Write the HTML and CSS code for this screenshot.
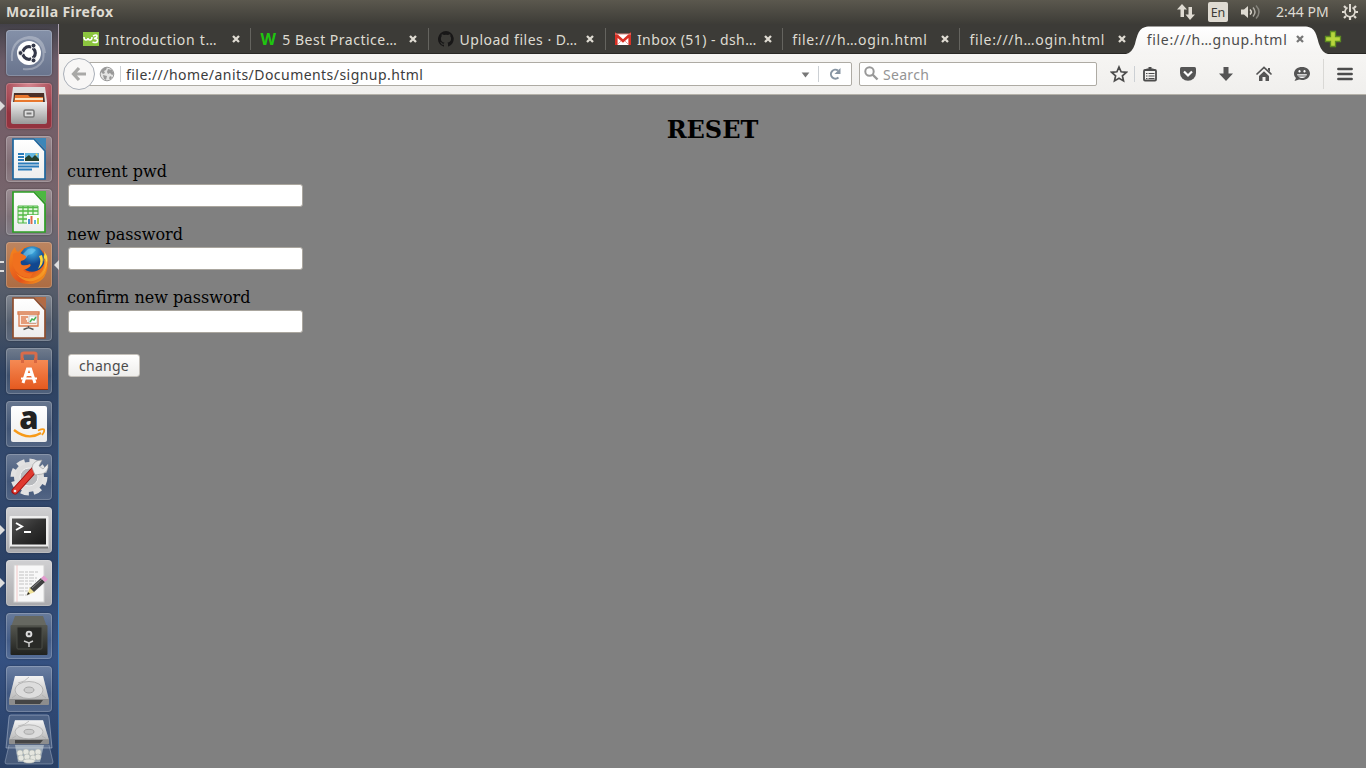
FILE: index.html
```html
<!DOCTYPE html>
<html lang="en">
<head>
<meta charset="utf-8">
<title>Mozilla Firefox</title>
<link rel="stylesheet" href="styles.css">
</head>
<body>
<svg class="defs" width="0" height="0" aria-hidden="true">
  <defs>
    <linearGradient id="metal" x2="0" y2="1"><stop stop-color="#eee"/><stop offset="1" stop-color="#999"/></linearGradient>
    <linearGradient id="orange" x2="0" y2="1"><stop stop-color="#f58a54"/><stop offset="1" stop-color="#e4581e"/></linearGradient>
    <linearGradient id="paper" x2="0" y2="1"><stop stop-color="#fff"/><stop offset="1" stop-color="#ededed"/></linearGradient>
    <radialGradient id="globe" cx=".5" cy=".2"><stop stop-color="#41b4e8"/><stop offset="1" stop-color="#12478f"/></radialGradient>
    <linearGradient id="fox" x2="1" y2="1"><stop stop-color="#f58a1f"/><stop offset=".6" stop-color="#e4521b"/><stop offset="1" stop-color="#f7a81b"/></linearGradient>
    <linearGradient id="term" x2="1" y2="1"><stop stop-color="#555"/><stop offset=".5" stop-color="#303030"/><stop offset="1" stop-color="#191919"/></linearGradient>
    <linearGradient id="safe" x2="0" y2="1"><stop stop-color="#555750"/><stop offset="1" stop-color="#20211e"/></linearGradient>
    <symbol id="x" viewBox="0 0 8 8"><path d="M1 1l6 6M7 1L1 7" stroke="currentColor" stroke-width="2.3"/></symbol>
    <symbol id="disk" viewBox="0 0 46 46" preserveAspectRatio="none">
      <path d="M9 10h28l6 24H3z" fill="url(#metal)"/>
      <path d="M9 10h28l6 24H3z" fill="#fff" opacity=".3"/>
      <path d="M3 33h40v5q0 1-1 1H4q-1 0-1-1z" fill="#8d8d8d"/><path d="M9 34h28l-3 4H9z" fill="#454545"/>
      <ellipse cx="23" cy="24" rx="14" ry="8.5" fill="#ddd" stroke="#aaa" stroke-width=".8"/>
      <ellipse cx="23" cy="24" rx="5" ry="3" fill="#ccc" stroke="#999" stroke-width=".8"/>
      <path d="M12 17q7-1 11-6M6 32l4-3M40 32l-4-3" fill="none" stroke="#aaa" stroke-width=".7"/>
    </symbol>
  </defs>
</svg>

<header class="panel">
  <span class="panel-title">Mozilla Firefox</span>
  <div class="indicators">
    <svg class="net" width="18" height="18" viewBox="0 0 18 18"><path d="M5 1l5 5.500H7V14H3.500V6.500H0zM13 17l-4.500-5.500h3V4H15v7.500h3z" fill="#dfdbd2"/></svg>
    <span class="lang">En</span>
    <svg class="sound" width="20" height="16" viewBox="0 0 20 16"><path d="M0 5.500h3L7 2v12l-4-3.500H0z" fill="#dfdbd2"/><path d="M9 5.500q2.500 2.500 0 5" stroke="#dfdbd2" stroke-width="1.500" fill="none"/><path d="M12 3.500q4 4.500 0 9" stroke="#b0ada5" stroke-width="1.500" fill="none"/><path d="M15 1.500q6 6.500 0 13" stroke="#85837c" stroke-width="1.500" fill="none"/></svg>
    <span class="clock">2:44 PM</span>
    <svg class="gear" width="18" height="18" viewBox="0 0 18 18"><g stroke="#dfdbd2" fill="none"><path d="M6.500 4.500a5 5 0 1 0 5 0" stroke-width="1.700"/><path d="M9 1v8" stroke-width="2"/><path d="M3.800 9H1M17 9h-2.800M9 14v3M5 13l-2 2M13 13l2 2M5 5L3 3M13 5l2-2" stroke-width="2.200"/></g></svg>
  </div>
</header>

<div class="desktop">
<nav class="launcher">
  <div class="tile dash"><svg viewBox="0 0 46 46"><g fill="none" stroke="#fff" opacity=".28" stroke-width="2"><path d="M6 31Q4 10 23 7q14 0 16 16M7 19Q13 5 28 9q12 6 9 21-6 11-20 9"/></g><circle cx="23" cy="23" r="12" fill="#fff"/><circle cx="23" cy="23" r="6.300" fill="none" stroke="#343849" stroke-width="3.200"/><path d="M23 23H13M23 23l5-9M23 23l5 9" stroke="#fff" stroke-width="1.300"/><circle cx="23" cy="23" r="4.300" fill="#fff"/><g fill="#343849" stroke="#fff" stroke-width=".8"><circle cx="14.500" cy="23" r="2.400"/><circle cx="27.500" cy="15.600" r="2.400"/><circle cx="27.500" cy="30.400" r="2.400"/></g></svg></div>
  <div class="tile red run"><svg viewBox="0 0 46 46"><path d="M7 4h32l2 15H5z" fill="#ddd"/><path d="M8 10h30l1 10H7z" fill="#4c3028"/><path d="M9 12h13l2 2h13v6H8z" fill="#e8772e"/><path d="M9 16h28" stroke="#fbe4c0" stroke-width="2"/><path d="M5 19h36v20q0 2-2 2H7q-2 0-2-2z" fill="url(#metal)"/><rect x="18" y="27" width="10" height="7" rx="1.500" fill="#ddd" stroke="#777" stroke-width="1.500"/><path d="M20.500 30.500h5" stroke="#777" stroke-width="2"/></svg></div>
  <div class="tile"><svg viewBox="0 0 46 46"><path d="M7 3h21l11 12v28H7z" fill="url(#paper)" stroke="#1d669e" stroke-width="1.700"/><path d="M28 2h12v12z" fill="#3d86b8"/><path d="M12 18h6M12 21h6M12 24h6M12 27.500h21M12 30.500h21M12 33.500h14" stroke="#2a7cbb" stroke-width="1.800"/><path d="M19 17h14v8H19z" fill="#65b6df"/><path d="M19 25v-3l4-3 3 3 3-3 4 4v2z" fill="#25402c"/><circle cx="30.500" cy="18.500" r="1" fill="#ffd84b"/></svg></div>
  <div class="tile"><svg viewBox="0 0 46 46"><path d="M7 3h21l11 12v28H7z" fill="url(#paper)" stroke="#2c9e24" stroke-width="1.700"/><path d="M28 2h12v12z" fill="#4cb840"/><path d="M12 17h20v17H12z" fill="#e4f5df" stroke="#51b847"/><path d="M12 18.500h20M12 22h20M12 26h20M12 30h20M17 17v17M22 17v17M27 17v17" stroke="#51b847" stroke-width="1.300"/><path d="M21 26h13v9H21z" fill="#fff"/><path d="M23 35v-5" stroke="#4b8fd1" stroke-width="2"/><path d="M25.500 35v-8" stroke="#df6847" stroke-width="2"/><path d="M29 35v-4" stroke="#62b7d7" stroke-width="2"/><path d="M32 35v-6" stroke="#bfd94c" stroke-width="2"/></svg></div>
  <div class="tile firefox run two focus"><svg viewBox="0 0 46 46"><path d="M5 11q2-4 4-6 0 3 3 5Q17 4 25 4q17 2 17 19-2 19-19 19Q8 42 4 29 2 20 5 11z" fill="url(#fox)"/><circle cx="26" cy="17" r="12.800" fill="url(#globe)"/><path d="M22 7q5-2 8 1l-4 4-4 1-2 3-3-4z" fill="#82cef0" opacity=".55"/><path d="M7 12q5-3 11 1 3 1 2 3-2 3-5 3-1 3 1 4 4 1 8-1 2 2-2 4-3 2-5 2 4 4 10 3l-3 5q-12 0-17-12z" fill="#f0701e"/><path d="M36 9q3 5 1 11l2-4q2 9-3 16 7-8 5-18-2-3-3-5 1 3 0 5zM33 14q3 6-1 13 7-5 4-14z" fill="#ffd93d"/><path d="M38 17q2 15-11 19-9 2-17-5 7 10 17 8 15-4 14-19z" fill="#f8a229" opacity=".7"/></svg></div>
  <div class="tile"><svg viewBox="0 0 46 46"><path d="M7 3h21l11 12v28H7z" fill="url(#paper)" stroke="#8f4e2e" stroke-width="1.700"/><path d="M28 2h12v12z" fill="#b26b45"/><path d="M12 17h21v2H12zM13 19h19v12H13z" fill="#fbece3" stroke="#d97b4e" stroke-width="1.300"/><path d="M15 22h7M15 24h5M15 28h15M15 26h6" stroke="#df8157" stroke-width="1.300"/><path d="M23 21h8v7h-8z" fill="#fff" stroke="#aaa" stroke-width=".6"/><path d="M24 27l2-3 2 1 2-3" stroke="#48b054" stroke-width="1.500" fill="none"/><path d="M22.500 31v2M17.500 34.500l5-2 5 2" fill="none" stroke="#555" stroke-width="1.600"/></svg></div>
  <div class="tile"><svg viewBox="0 0 46 46"><path d="M16 15V6q0-1 2-1h10q2 0 2 1v9" fill="none" stroke="#d86c4a" stroke-width="3"/><path d="M4 12h38v30H4z" fill="url(#orange)"/><path d="M16.500 10v5M29.500 10v5" stroke="#d96740" stroke-width="3"/><path d="M4 41.500h38" stroke="#8d3214"/><path d="M17 35l4.500-14h3L29 35M20 26.500h6" fill="none" stroke="#fff" stroke-width="3"/><path d="M15 30.500h16" stroke="#fff" stroke-width="2"/></svg></div>
  <div class="tile"><svg viewBox="0 0 46 46"><rect x="5" y="5" width="36" height="36" rx="2" fill="url(#paper)"/><text x="23" y="28" text-anchor="middle" class="amazon">a</text><path d="M8 29q14 11 27 3" fill="none" stroke="#f79a18" stroke-width="2.300"/><path d="M32 29.500q5-2 6-1 1 2-2 5.500" fill="none" stroke="#f79a18" stroke-width="1.800"/></svg></div>
  <div class="tile"><svg viewBox="0 0 46 46"><circle cx="23" cy="23" r="15" fill="#ddd"/><circle cx="23" cy="23" r="16" fill="none" stroke="#e2e2e2" stroke-width="5" stroke-dasharray="7.800 4.760"/><circle cx="23" cy="23" r="9" fill="#b8babd" stroke="#f2f2f2"/><path d="M9 37l19-21" stroke="#9f1010" stroke-width="7" stroke-linecap="round"/><path d="M9 37l18-20" stroke="#df3a30" stroke-width="5" stroke-linecap="round"/><path d="M26 14q1-8 10-8l-3 6 4 3 5-5q1 8-6 10l-7 1z" fill="#ececec" stroke="#999" stroke-width=".6"/><circle cx="9" cy="37" r="1.300" fill="#eee"/></svg></div>
  <div class="tile light run"><svg viewBox="0 0 46 46"><rect x="3.500" y="9" width="39" height="32" rx="1" fill="#eee"/><path d="M4 40.500h38" stroke="#777" stroke-width="2"/><rect x="6" y="11.500" width="34" height="26" fill="url(#term)"/><path d="M10 16l6 3.500-6 3.500" fill="none" stroke="#fff" stroke-width="2"/><path d="M18 25h7" stroke="#fff" stroke-width="2"/></svg></div>
  <div class="tile light run"><svg viewBox="0 0 46 46"><rect x="8" y="5" width="30" height="37" fill="#f8f8f8" stroke="#d2d2d2"/><path d="M11 5v37" stroke="#f1b5b5" stroke-width=".7"/><path d="M13 12h19M13 15h16M13 18h18M13 21h17M13 24h13M13 28h18M13 31h15M13 35h9" stroke="#c2c2c2" stroke-width="1" stroke-dasharray="5 1 3 1"/><path d="M21 35l3-8 5 5z" fill="#eee096"/><path d="M24 28l11-10 4 4-11 10z" fill="#414141"/><path d="M26 28l10-9" stroke="#888"/><path d="M35 18l3-2.500 4 4-3 2.500z" fill="#e59cd0"/><path d="M21 35l1-3 2 2z" fill="#222"/></svg></div>
  <div class="tile"><svg viewBox="0 0 46 46"><path d="M9 3h28l4 11H5z" fill="#666861"/><rect x="4.500" y="12" width="37" height="30" rx="1" fill="url(#safe)"/><rect x="11" y="14" width="25" height="22" rx="1" fill="#292a27" stroke="#4b4c47"/><circle cx="23" cy="21" r="2.600" fill="#aaa" stroke="#ddd" stroke-width="1.500"/><circle cx="23" cy="21" r="1" fill="#222"/><path d="M18 28l5 2 4-2M23 30v4" stroke="#ccc" stroke-width="1.500" fill="none"/></svg></div>
  <div class="tile"><svg viewBox="0 0 46 46"><use href="#disk"/></svg></div>
  <div class="fold"><svg viewBox="0 0 50 52"><path d="M5 3q0-2 2-2h36q2 0 2 2l3 31H2z" fill="#fff" fill-opacity=".14" stroke="#bbc7db" stroke-opacity=".5"/><path d="M5 31L1 48q0 2 2 2h44q2 0 2-2l-4-17" fill="#fff" fill-opacity=".14" stroke="#bbc7db" stroke-opacity=".4"/><path d="M11 31h29l-4 17H14z" fill="#ced8dc" opacity=".6"/><g fill="#e5e6df" stroke="#b4b8b3" stroke-width=".6"><circle cx="16" cy="39" r="3"/><circle cx="22" cy="38" r="3"/><circle cx="28" cy="39" r="3"/><circle cx="34" cy="38" r="3"/><circle cx="17" cy="44" r="3"/><circle cx="23" cy="43" r="3"/><circle cx="29" cy="44" r="3"/><circle cx="34" cy="43" r="3"/><ellipse cx="25" cy="47" rx="6" ry="2"/></g><use href="#disk" x="2" y="-2" width="46" height="38"/></svg></div>
</nav>

<main class="browser">
  <div class="tabs">
    <div class="tab"><svg class="fav" viewBox="0 0 16 16"><rect y="1" width="16" height="14" fill="#8cc63f"/><path d="M1 6q0 3 2 3t2-2q0 2 2 2t2-3M10 5q4-2 4 0t-3 2.500q4 0 3.500 2.500t-5 1" fill="none" stroke="#fff" stroke-width="1.500"/></svg><span class="label t1">Introduction t…</span><svg class="close"><use href="#x"/></svg></div>
    <div class="tab"><span class="fav whatwg">W</span><span class="label t2">5 Best Practice…</span><svg class="close"><use href="#x"/></svg></div>
    <div class="tab"><svg class="fav" viewBox="0 0 16 16"><path fill="#181717" d="M8 0a8 8 0 0 0-2.500 15.600c.4.100.5-.2.500-.4v-1.500c-2.200.5-2.700-1-2.700-1-.4-.9-.9-1.200-.9-1.200-.7-.5.100-.5.100-.5.800.1 1.200.8 1.200.8.700 1.300 1.900.9 2.300.7.100-.5.300-.9.500-1.100-1.800-.2-3.600-.9-3.600-4 0-.9.300-1.600.8-2.100 0-.200-.3-1 .1-2.100 0 0 .7-.2 2.200.8a7 7 0 0 1 4 0c1.500-1 2.200-.8 2.200-.8.400 1.100.1 1.900.1 2.100.5.600.8 1.300.8 2.100 0 3.100-1.900 3.800-3.700 4 .3.300.6.800.6 1.500v2.200c0 .2.100.5.500.4A8 8 0 0 0 8 0z"/></svg><span class="label t2">Upload files · D…</span><svg class="close"><use href="#x"/></svg></div>
    <div class="tab"><svg class="fav" viewBox="0 0 16 16"><path d="M0 3h16v11H0z" fill="#fff"/><path d="M3 13l4-4M13 13L9 9" stroke="#e7a9a4"/><path d="M1.300 14V4L8 10l6.700-6v10" fill="none" stroke="#d93025" stroke-width="2.600"/><path d="M0 3h16" stroke="#e58b84"/></svg><span class="label t4">Inbox (51) - dsh…</span><svg class="close"><use href="#x"/></svg></div>
    <div class="tab"><span class="label t5">file:///h…ogin.html</span><svg class="close"><use href="#x"/></svg></div>
    <div class="tab last"><span class="label t5">file:///h…ogin.html</span><svg class="close"><use href="#x"/></svg></div>
    <div class="tab active"><svg class="shape" width="202" height="29" viewBox="0 0 202 29"><defs><linearGradient id="tabfill" x2="0" y2="1"><stop stop-color="#fff"/><stop offset="1" stop-color="#f5f4f2"/></linearGradient></defs><path d="M0 29V28Q6 27 9 18C12 7 13 .5 24 .5H178C189 .5 190 7 193 18Q196 27 202 28V29z" fill="url(#tabfill)"/></svg><span class="label t5">file:///h…gnup.html</span><svg class="close"><use href="#x"/></svg></div>
    <svg class="plus" width="18" height="18" viewBox="0 0 18 18"><path d="M6.500 1.500h5v5h5v5h-5v5h-5v-5h-5v-5h5z" fill="#b7d63d" stroke="#5c8a21" stroke-width="1.300"/></svg>
  </div>

  <div class="toolbar">
    <div class="urlbar">
      <div class="back"><svg width="18" height="18" viewBox="0 0 18 18"><path d="M9 3L3.500 9 9 15M4 9h12" fill="none" stroke="#a9a9a7" stroke-width="3.200"/></svg></div>
      <svg class="site" width="16" height="16" viewBox="0 0 16 16"><circle cx="8" cy="8" r="6.800" fill="#e4e4e3" stroke="#999"/><path d="M2 5q2-4 6-3.500L7 4 5 5l1 2-2 1-2-2zM9 3l4 1 2 4-2 1-2-2-2 1-1-2zM4 9l4 1-1 4-2-1zM11 10l2 1-2 3-1-2z" fill="#999"/></svg>
      <span class="vsep"></span>
      <span class="address">file:///home/anits/Documents/signup.html</span>
      <svg class="drop" width="9" height="6" viewBox="0 0 10 7"><path d="M.5.500h9L5 6.500z" fill="#777"/></svg>
      <span class="vsep"></span>
      <svg class="reload" width="14" height="14" viewBox="0 0 14 14"><path d="M10.500 10.500A4.500 4.500 0 1 1 10 3.500" fill="none" stroke="#8795a3" stroke-width="2"/><path d="M12.500 1v6h-6z" fill="#8795a3"/></svg>
    </div>
    <div class="search"><svg width="15" height="15" viewBox="0 0 15 15"><circle cx="5.500" cy="5.500" r="4.200" fill="none" stroke="#999" stroke-width="2"/><path d="M8.500 8.500l5 5" stroke="#999" stroke-width="2.400"/></svg><span class="placeholder">Search</span></div>
    <div class="tools">
      <div class="tool slim"><svg width="18" height="18" viewBox="0 0 18 18"><path d="M9 2l2.100 4.800 5.200.5-3.900 3.500 1.100 5.100L9 13.300l-4.500 2.600 1.100-5.100-3.900-3.500 5.200-.5z" fill="none" stroke="#4c4c4c" stroke-width="1.700"/></svg></div>
      <span class="vsep"></span>
      <div class="tool clip"><svg width="16" height="16" viewBox="0 0 16 16"><rect x="2" y="4" width="12" height="10.500" rx="1" fill="none" stroke="#4c4c4c" stroke-width="1.800"/><path d="M4.500 5V2.500h2V1h3v1.500h2V5" fill="#4c4c4c"/><path d="M4 7.500h1.500M6.500 7.500h6M4 10h1.500M6.500 10h6M4 12.500h1.500M6.500 12.500h6" stroke="#4c4c4c" stroke-width="1.100"/></svg></div>
      <div class="tool pocket"><svg width="18" height="18" viewBox="0 0 18 18"><path d="M2.500 2h13q1.500 0 1.500 1.500V8a8 7.800 0 0 1-16 0V3.500Q1 2 2.500 2z" fill="#555"/><path d="M5 6.500l4 4 4-4" fill="none" stroke="#fff" stroke-width="2.200"/></svg></div>
      <div class="tool"><svg width="16" height="16" viewBox="0 0 16 16"><path d="M5.500 1h5v6.500H15l-7 7.500-7-7.500h4.500z" fill="#555"/></svg></div>
      <div class="tool"><svg width="18" height="18" viewBox="0 0 18 18"><path d="M1.500 9.500L9 2.500l7.500 7" fill="none" stroke="#555" stroke-width="1.700"/><path d="M4 11l5-4.700 5 4.700v5h-3.500v-4h-3v4H4zM13 3h2v4l-2-2z" fill="#555"/></svg></div>
      <div class="tool"><svg width="18" height="18" viewBox="0 0 18 18"><path d="M9 2c4.500 0 8 2.700 8 6.500S13.500 15 9 15c-1 0-2-.2-2.800-.4L1.500 16l1.500-3C1.600 11.700 1 10.300 1 8.500 1 4.700 4.500 2 9 2z" fill="#555"/><ellipse cx="6.500" cy="6.300" rx="1" ry="1.300" fill="#fff"/><ellipse cx="11.500" cy="6.300" rx="1" ry="1.300" fill="#fff"/><path d="M4 9.300h10q-1 3.700-5 3.700t-5-3.700z" fill="#fff"/><path d="M4.500 11h9" stroke="#555"/></svg></div>
      <div class="menu"><svg width="16" height="14" viewBox="0 0 16 14"><path d="M1.300 2h13.400M1.300 7h13.400M1.300 12h13.400" stroke="#4c4c4c" stroke-width="2.400" stroke-linecap="round"/></svg></div>
    </div>
  </div>

  <section class="page">
    <h2>RESET</h2>
    <form>
      <label>current pwd<input type="password"></label>
      <label>new password<input type="password"></label>
      <label>confirm new password<input type="password"></label>
      <button type="button">change</button>
    </form>
  </section>
</main>
</div>
</body>
</html>
```
FILE: styles.css
```css
* { box-sizing: border-box; }
body { margin: 0; width: 1366px; height: 768px; overflow: hidden; display: flex; flex-direction: column; font: 14px "Noto Sans", sans-serif; }
svg { display: block; flex: none; }
.defs { position: absolute; }

.panel { height: 24px; flex: none; display: flex; align-items: center; justify-content: space-between; padding: 0 7px 0 6px; background: linear-gradient(#5b584e, #3d3c37); color: #dfdbd2; }
.panel-title { font-weight: bold; font-size: 14px; letter-spacing: .4px; line-height: 19px; margin-top: -1px; }
.indicators { display: flex; align-items: center; }
.lang { width: 20px; height: 20px; margin-left: 13px; border-radius: 2px; background: #dfdbd2; color: #3c3b37; display: flex; align-items: center; justify-content: center; font-size: 12.500px; }
.sound { margin-left: 13px; }
.clock { margin-left: 15px; width: 53px; margin-top: -1px; white-space: nowrap; }
.gear { margin-left: 12px; }

.desktop { flex: 1; min-height: 0; display: flex; }
.launcher { width: 59px; flex: none; padding: 6px 0 0 6px; display: flex; flex-direction: column; gap: 7px; background: linear-gradient(#434149, #6b5b68 5%, #755f68 16%, #76666d 25%, #636672 31%, #4c5564 39%, #2e4261 47%, #344a6f 60%, #2c4266 72%, #355182 85%, #293f64); border-right: 1px solid; border-image: linear-gradient(#aaa3b3, #c98f8a 9%, #c98f8a 28%, #6d7684 40%, #4e6681 50%, #3979ab 65%, #3f8acb 80%, #2e5d96) 1; }
.tile { position: relative; width: 46px; height: 46px; flex: none; border-radius: 4px; background: linear-gradient(rgba(255,255,255,.27), rgba(255,255,255,.08) 60%, rgba(255,255,255,.16)); box-shadow: inset 0 0 0 1px rgba(255,255,255,.2), 0 0 2px rgba(0,0,0,.4); }
.dash { background: linear-gradient(#8490a8, #69748d); }
.red { background: radial-gradient(circle at 50% 0, #d6868f, #93333f 70%); }
.firefox { background: linear-gradient(#bd8560, #ad6c42); }
.light { background: linear-gradient(#d0d0d2, #aaaaad); }
.run::before { content: ""; position: absolute; left: -6px; top: 18px; border: 5px solid transparent; border-left-color: #ddd; border-right: 0; }
.run.two::before { width: 4px; height: 7px; top: 19px; border: solid #ddd; border-width: 2px 0; }
.focus::after { content: ""; position: absolute; right: -7px; top: 18px; border: 5px solid transparent; border-right-color: #ddd; border-left: 0; }
.fold { width: 50px; height: 52px; margin: -5px 0 0 -2px; flex: none; }
.amazon { font: 800 31px "Open Sans", sans-serif; fill: #222; }

.browser { flex: 1; min-width: 0; display: flex; flex-direction: column; }
.tabs { height: 30px; flex: none; display: flex; align-items: center; padding: 1px 0 0 15px; background: #3c3b37; border-bottom: 1px solid #292825; color: #dfdbd2; }
.tab { position: relative; width: 177.300px; height: 22px; flex: none; display: flex; align-items: center; padding: 0 10px 0 9px; border-right: 1px solid #65645f; }
.tab.last, .tab.active { border-color: transparent; }
.fav { width: 16px; height: 16px; margin-right: 6px; flex: none; }
.whatwg { color: #1fc60f; font: bold 16px/16px "Open Sans", sans-serif; display: flex; justify-content: center; }
.label { position: relative; white-space: nowrap; flex: 1; }
.t1 { letter-spacing: .68px; }
.t2 { letter-spacing: .5px; }
.t4 { letter-spacing: .43px; }
.t5 { letter-spacing: .68px; }
.close { position: relative; width: 8px; height: 8px; margin-right: .5px; }
.active { color: #4c4c4c; }
.active .close { color: #777; }
.shape { position: absolute; left: -12px; top: -2px; }
.plus { margin-left: 9px; }

.toolbar { height: 41px; flex: none; display: flex; align-items: center; padding: 0 0 1px 20px; background: linear-gradient(#f6f5f3, #f0efed); border-bottom: 1px solid #b4b1a9; }
.urlbar { position: relative; width: 773px; height: 24px; display: flex; align-items: center; padding-left: 19px; background: #fff; border: 1px solid #aeaba4; border-radius: 2px; color: #3c3c3c; }
.back { position: absolute; left: -17px; top: -5px; width: 32px; height: 32px; border-radius: 50%; border: 1px solid #a9afb8; background: #f8f7f6; display: flex; align-items: center; justify-content: center; }
.vsep { width: 1px; height: 16px; background: #ccd0d4; flex: none; }
.site { margin-right: 5px; }
.address { margin-left: 5px; padding-top: 2px; flex: 1; white-space: nowrap; letter-spacing: .45px; }
.drop { margin: 2px 8px 0 0; }
.reload { margin: 0 9px; }
.search { width: 238px; height: 24px; margin-left: 7px; padding-left: 4px; background: #fff; border: 1px solid #aeaba4; border-radius: 2px; display: flex; align-items: center; color: #949494; }
.placeholder { margin-left: 4px; padding-top: 2px; letter-spacing: .3px; }
.tools { flex: 1; display: flex; align-items: center; padding-left: 6px; }
.tool { width: 38px; display: flex; justify-content: center; flex: none; }
.tool.slim { width: 31px; }
.tool.clip { width: 30px; }
.pocket { margin-left: 4px; }
.menu { height: 30px; flex: 1; margin-left: 2px; border-left: 1px solid #d9d8d5; display: flex; align-items: center; justify-content: center; }

.page { flex: 1; padding: 0 8px; background: #808080; font: 16px/19px "DejaVu Serif", serif; color: #000; }
h2 { margin: 21px 0 18px; font: bold 24px/28px "DejaVu Serif", serif; text-align: center; }
label { display: block; height: 63px; }
input { display: block; width: 235px; height: 23px; margin: 3px 0 0 1px; border: 1px solid #aaa69e; border-radius: 3px; background: #fff; }
button { display: block; width: 72px; height: 23px; margin: 3px 0 0 1px; padding: 0; border: 1px solid #c4c0ba; border-radius: 3px; background: linear-gradient(#fff, #eeedeb); color: #4c4c4c; font: 14px/20px "Noto Sans", sans-serif; letter-spacing: .25px; }
```
